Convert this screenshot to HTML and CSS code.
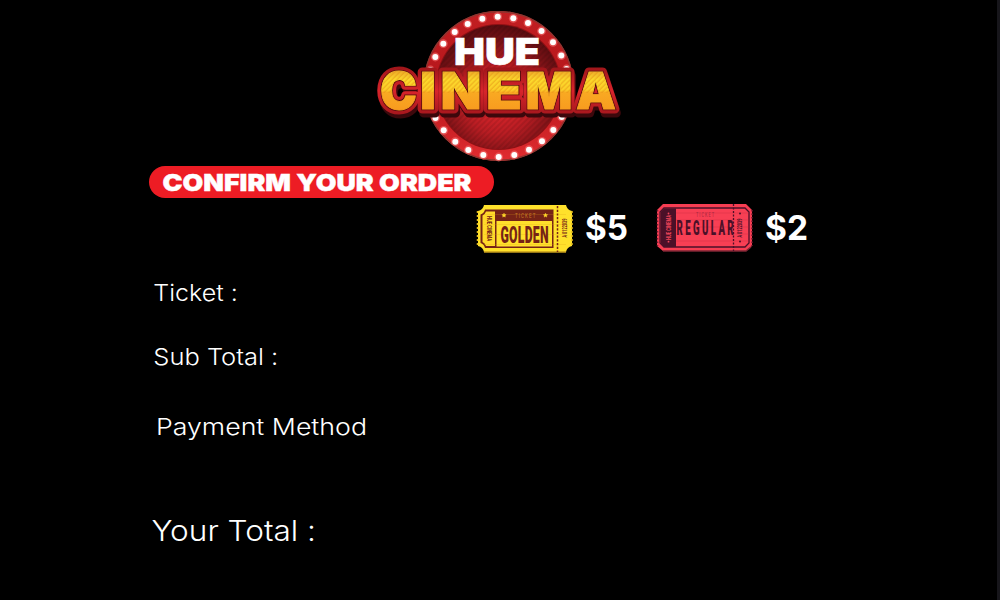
FILE: index.html
```html
<!DOCTYPE html>
<html lang="en">
<head>
<meta charset="utf-8">
<title>Hue Cinema</title>
<link rel="stylesheet" href="styles.css">
</head>
<body>
<main class="page">
  <svg class="logo" viewBox="370 5 260 160" role="img" aria-label="Hue Cinema">
    <defs>
      <radialGradient id="disc" cx="50%" cy="60%" r="62%">
        <stop offset="0" stop-color="#e8282e"/><stop offset=".45" stop-color="#b91d23"/><stop offset=".75" stop-color="#7a1216"/><stop offset="1" stop-color="#520b0f"/>
      </radialGradient>
      <linearGradient id="ring" x1="0" y1="0" x2="0" y2="1">
        <stop offset="0" stop-color="#c21f22"/><stop offset=".5" stop-color="#b5161b"/><stop offset="1" stop-color="#e02c30"/>
      </linearGradient>
      <linearGradient id="gold" gradientUnits="userSpaceOnUse" x1="0" y1="72" x2="0" y2="109">
        <stop offset="0" stop-color="#eeb02a"/><stop offset=".2" stop-color="#fbd92c"/><stop offset=".48" stop-color="#fcd029"/><stop offset=".56" stop-color="#f9a922"/><stop offset="1" stop-color="#f89c1f"/>
      </linearGradient>
      <linearGradient id="red" gradientUnits="userSpaceOnUse" x1="0" y1="66" x2="0" y2="116">
        <stop offset="0" stop-color="#9c1519"/><stop offset=".5" stop-color="#d8242b"/><stop offset="1" stop-color="#a3161c"/>
      </linearGradient>
      <pattern id="stripes" width="4" height="4" patternUnits="userSpaceOnUse" patternTransform="rotate(45)">
        <path d="M1 0V4" stroke="#000" stroke-opacity=".18" stroke-width="1"/>
      </pattern>
      <pattern id="shine" width="3.500" height="3.500" patternUnits="userSpaceOnUse" patternTransform="rotate(45)">
        <path d="M1 0V3.500" stroke="#e58a12" stroke-opacity=".6" stroke-width="1"/>
      </pattern>
      <clipPath id="upper"><path d="M370 60H630V93H370Z"/></clipPath>
      <g id="bulb"><circle r="4.400" fill="#f46a6a" fill-opacity=".65"/><circle r="3" fill="#fff"/></g>
      <g id="word">
        <text class="cine" x="380" y="109" textLength="37" lengthAdjust="spacingAndGlyphs">C</text>
        <text class="cine" x="420" y="109" textLength="16" lengthAdjust="spacingAndGlyphs">I</text>
        <text class="cine" x="440.500" y="109" textLength="41" lengthAdjust="spacingAndGlyphs">N</text>
        <text class="cine" x="486" y="109" textLength="36" lengthAdjust="spacingAndGlyphs">E</text>
        <text class="cine" x="525.500" y="109" textLength="47" lengthAdjust="spacingAndGlyphs">M</text>
        <text class="cine" x="576" y="109" textLength="40" lengthAdjust="spacingAndGlyphs">A</text>
      </g>
    </defs>
    <circle cx="498.500" cy="86" r="75" fill="url(#ring)"/>
    <circle cx="498.500" cy="86" r="74.300" fill="none" stroke="#8d3530" stroke-width="1.400"/>
    <circle cx="498.500" cy="87" r="63" fill="#8c1014"/>
    <circle cx="498.500" cy="87" r="62" fill="url(#disc)"/>
    <circle cx="498.500" cy="87" r="62" fill="url(#stripes)"/>
    <use href="#bulb" x="435.300" y="57"/><use href="#bulb" x="443.300" y="43.700"/><use href="#bulb" x="454.700" y="32"/><use href="#bulb" x="467.700" y="24"/><use href="#bulb" x="482.300" y="18.700"/><use href="#bulb" x="497.700" y="16.700"/><use href="#bulb" x="513.300" y="18.300"/><use href="#bulb" x="528" y="23"/><use href="#bulb" x="541.500" y="31"/><use href="#bulb" x="553" y="42.300"/><use href="#bulb" x="561.300" y="55.600"/><use href="#bulb" x="566.500" y="69"/><use href="#bulb" x="430.500" y="70"/>
    <use href="#bulb" x="435.500" y="118"/><use href="#bulb" x="443.700" y="130.300"/><use href="#bulb" x="455.300" y="141.700"/><use href="#bulb" x="468.300" y="150"/><use href="#bulb" x="483.300" y="155"/><use href="#bulb" x="498.700" y="157"/><use href="#bulb" x="514.300" y="155"/><use href="#bulb" x="529" y="149.700"/><use href="#bulb" x="542" y="141.300"/><use href="#bulb" x="553.300" y="130"/><use href="#bulb" x="561.700" y="117"/>
    <use class="depth" href="#word" x="1.500" y="3.500"/>
    <use class="rim" href="#word"/>
    <use class="edge" href="#word"/>
    <use class="face" href="#word"/>
    <g clip-path="url(#upper)"><use class="sheen" href="#word"/></g>
    <text class="hue" x="454" y="65" textLength="86" lengthAdjust="spacingAndGlyphs">HUE</text>
  </svg>

  <h1 class="banner">
    <svg width="345" height="32"><text class="heading" x="13.500" y="25" textLength="309" lengthAdjust="spacingAndGlyphs">CONFIRM YOUR ORDER</text></svg>
  </h1>

  <section class="tickets">
    <svg class="ticket" viewBox="474 200 102 56">
      <path d="M484 205h82q1 5 6 6v35q-5 1-6 6h-82q-1-5-6-6v-35q5-1 6-6Z" fill="#ffe12b"/>
      <path d="M477.500 211v36M572 211v36" stroke="#e0b91f" stroke-width="1.500" stroke-dasharray="2 2"/>
      <path d="M484 252h82" stroke="#c49b1c" stroke-width="1.400"/>
      <path d="M485 209.500h68.500v38.500H485q-1-4-4.500-5V214.500q3.500-1 4.500-5Z" fill="#762316"/>
      <path d="M486 211.500h9V246h-9q-1-3-3.500-4V215.500q2.500-1 3.500-4Z" fill="#ffda2a"/>
      <path d="M496.500 221H552v25.500h-55.500Z" fill="#ffe02c"/>
      <path d="M484 214.500h82m-82 10h82m-82 10h82m-82 10h82" stroke="#d99d18" stroke-opacity=".22" stroke-width="1"/>
      <path d="M557.500 206v46" stroke="#762316" stroke-width="1.500" stroke-dasharray="2.200 1.500"/>
      <path d="m504 213.200.6 1.400 1.500.1-1.200 1 .4 1.400-1.300-.8-1.300.8.4-1.400-1.200-1 1.500-.1ZM545.500 213.200l.6 1.400 1.500.1-1.200 1 .4 1.400-1.300-.8-1.300.8.400-1.400-1.200-1 1.500-.1Z" fill="#ffd72a" stroke="#ffd72a" stroke-width=".5"/>
      <text class="tiny" transform="translate(515 217.800) scale(.6 1)" fill="#c77b25" textLength="34" font-size="7.500">TICKET</text>
      <text class="name" transform="translate(500.500 242.800) scale(.5 1)" fill="#762316" font-size="24.500" textLength="96">GOLDEN</text>
      <text class="side" transform="translate(486.600 216) rotate(90)" fill="#762316" textLength="25" lengthAdjust="spacingAndGlyphs">HUE CINEMA</text>
      <text class="side" transform="translate(567 237.500) rotate(-90)" fill="#762316" textLength="19" lengthAdjust="spacingAndGlyphs">A 0122039</text>
    </svg>
    <svg class="price" viewBox="0 0 50 50"><text class="amount" x="1" y="40" textLength="43" lengthAdjust="spacingAndGlyphs">$5</text></svg>
    <svg class="ticket second" viewBox="654 200 102 56">
      <path d="M663 204h83l6 6v36l-6 5h-83l-6-5v-36Z" fill="#f63d52"/>
      <path d="M657.500 210v36M752 210v36" stroke="#711d31" stroke-width="1.500" stroke-dasharray="1.500 2"/>
      <path d="M663 251h83l5-4" fill="none" stroke="#7d2634" stroke-width="1.500"/>
      <path d="M664 208h81l4 4v31l-4 4h-81l-4-4v-31Z" fill="#f83f54" stroke="#4b1028" stroke-width="1.300"/>
      <path d="M664 208.500h12V247h-12l-3.500-4v-31Z" fill="#4b1028"/>
      <path d="M676 213h73m-73 7h73m-73 7h73m-73 7h73m-73 7h73" stroke="#b51f3d" stroke-opacity=".25" stroke-width="1"/>
      <path d="M733.500 204v47" stroke="#4b1028" stroke-width="1.300" stroke-dasharray="2 1.500"/>
      <text class="tiny" transform="translate(696 216.500) scale(.6 1)" fill="#a92740" textLength="30" font-size="6.500">TICKET</text>
      <text class="name" transform="translate(676.500 234.500) scale(.48 1)" fill="#4b1028" font-size="20" textLength="119">REGULAR</text>
      <text class="side" transform="translate(671 240) rotate(-90)" fill="#f04459" textLength="25" lengthAdjust="spacingAndGlyphs">HUE CINEMA</text>
      <text class="side" transform="translate(742 237.500) rotate(-90)" fill="#4b1028" textLength="19" lengthAdjust="spacingAndGlyphs">A 0122039</text>
      <g fill="#4b1028"><circle cx="740" cy="213.500" r="1"/><circle cx="740" cy="241.500" r="1"/></g>
      <g fill="#f04459"><circle cx="668.500" cy="213.500" r=".9"/><circle cx="668.500" cy="241.700" r=".9"/></g>
    </svg>
    <svg class="price" viewBox="0 0 50 50"><text class="amount" x="1" y="40" textLength="43" lengthAdjust="spacingAndGlyphs">$2</text></svg>
  </section>

  <section class="summary">
    <svg class="line" viewBox="0 0 240 40"><text class="label" x="3.300" y="31" textLength="84.500" lengthAdjust="spacingAndGlyphs">Ticket :</text></svg>
    <svg class="line" viewBox="0 0 240 40"><text class="label" x="3.300" y="31" textLength="125" lengthAdjust="spacingAndGlyphs">Sub Total :</text></svg>
    <svg class="line method" viewBox="0 0 240 40"><text class="label" x="6" y="31" textLength="211" lengthAdjust="spacingAndGlyphs">Payment Method</text></svg>
    <svg class="line total" viewBox="0 0 240 40"><text class="label" x="1.500" y="31" textLength="164.500" lengthAdjust="spacingAndGlyphs">Your Total :</text></svg>
  </section>
</main>
</body>
</html>
```
FILE: styles.css
```css
body { margin: 0; background: #000; }
.page {
  box-sizing: border-box;
  width: 1000px;
  height: 600px;
  padding: 5px 0 0 149px;
  border-right: 3px solid #17161b;
  overflow: hidden;
  display: flex;
  flex-direction: column;
  align-items: flex-start;
  background: #000;
  font-family: Inter, "Liberation Sans", sans-serif;
}
svg { display: block; flex: none; overflow: visible; }
.logo { width: 260px; height: 160px; margin-left: 221px; }
.banner { margin: 1px 0 0; width: 345px; height: 32px; border-radius: 16px; background: #ed1c24; }
.heading { font-size: 23.500px; font-weight: 900; fill: #fff; stroke: #fff; stroke-width: .4px; }
.tickets { display: flex; margin: 2px 0 0 325px; height: 56px; }
.ticket { width: 102px; height: 56px; }
.ticket.second { margin-left: 20px; }
.price { width: 50px; height: 50px; margin-left: 8px; }
.amount { font-size: 34px; font-weight: 700; fill: #fff; }
.tiny { font-family: Roboto, sans-serif; }
.name { font-family: Roboto, sans-serif; font-weight: 900; }
.side { font-family: Roboto, sans-serif; font-size: 7px; font-weight: 700; }
.cine { font-size: 50.500px; font-weight: 900; }
.hue { font-size: 36.500px; font-weight: 900; fill: #fff; stroke: #fff; stroke-width: .6px; }
.depth { fill: #3d080c; stroke: #3d080c; stroke-width: 9px; stroke-linejoin: round; }
.rim { fill: url(#red); stroke: url(#red); stroke-width: 9px; stroke-linejoin: round; }
.edge { fill: #5c0d0e; stroke: #5c0d0e; stroke-width: 2.500px; }
.face { fill: url(#gold); stroke: url(#gold); stroke-width: .8px; }
.sheen { fill: url(#shine); }
.summary { display: flex; flex-direction: column; margin: 14px 0 0 1px; }
.line { width: 240px; height: 40px; margin-bottom: 24px; }
.label { font-size: 23.300px; font-weight: 300; fill: #fff; }
.method { margin-top: 6px; }
.total { margin-top: 42px; margin-bottom: 0; }
.total .label { font-size: 29px; }
```
